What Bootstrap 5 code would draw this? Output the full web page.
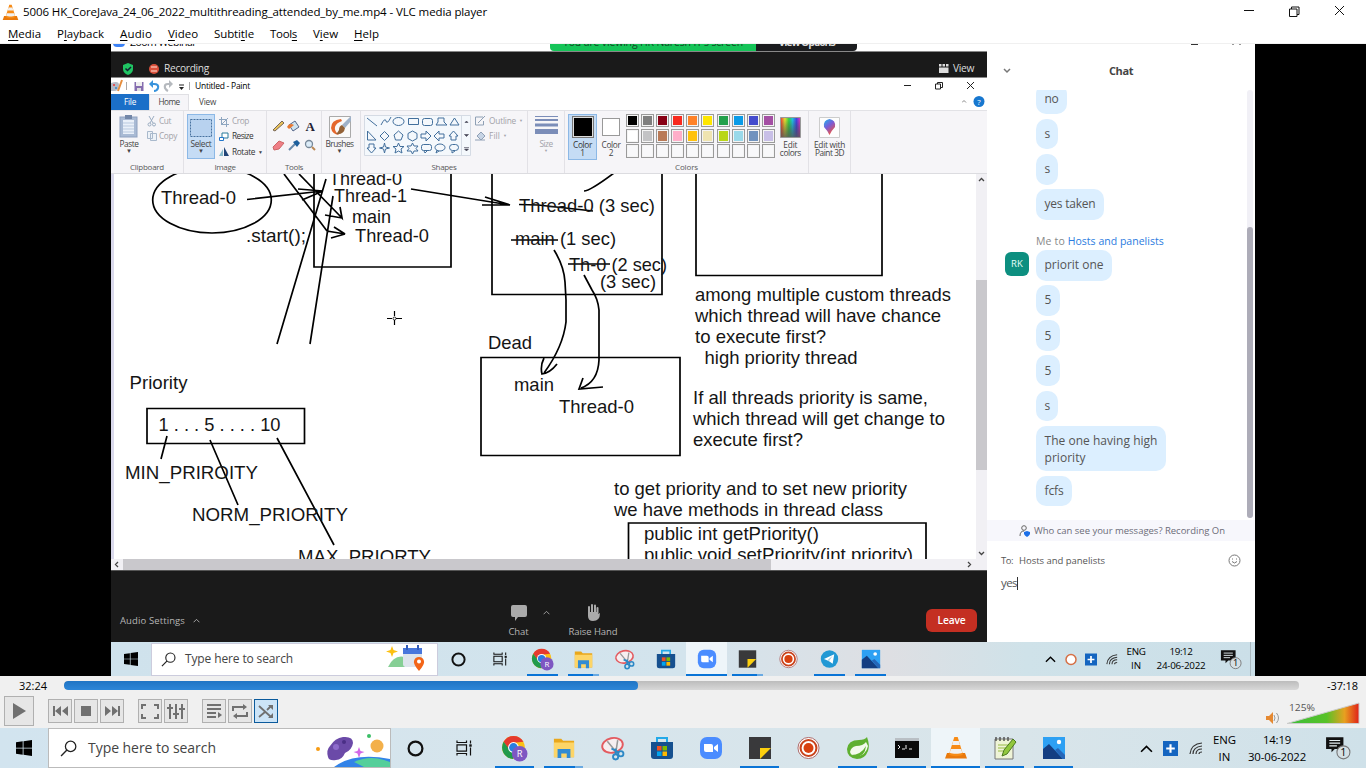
<!DOCTYPE html>
<html lang="en">
<head>
<meta charset="utf-8">
<title>VLC media player</title>
<link href="https://cdn.jsdelivr.net/npm/bootstrap@5.3.0/dist/css/bootstrap.min.css" rel="stylesheet">
<style>
body{width:1366px;height:768px;overflow:hidden;font-family:"Open Sans","Noto Sans",sans-serif;font-size:11.5px;line-height:1;color:#000;background:#fff}
svg{display:block;flex:none}
[data-w]{display:inline-block;white-space:nowrap}
.titlebar{height:24px;padding-left:2px}
.menubar{height:20px;padding-left:8px;gap:16px;border-bottom:1px solid #f0f0f0}
.menubar u{text-underline-offset:2px}
.stage{height:632px;background:#000;padding-left:111px}
.screen{width:1144px;height:632px;background:#fff}
.meeting{width:876px;height:598px}
.chat-pane{width:268px;height:598px;color:#555}
.win-strip{height:7px;overflow:hidden}
.green-tab{width:206px;height:7px;background:#15c458;border-radius:0 0 0 4px;margin-left:353px;color:#164425}
.dark-tab{width:101px;height:7px;background:#1b1c1e;border-radius:0 0 4px 0;color:#ddd}
.clip-line{font-size:10.5px;line-height:12px;margin-top:-8px}
.meet-bar{height:27px;background:#1a1a1a;border-top:1px solid #888;border-bottom:1px solid #888;color:#ddd;font-size:10.2px;padding:7px 0 0 0}
.paint-title{height:16px;font-size:8.5px}
.paint-tabs{height:16px;font-size:8.2px;color:#444}
.tab-file{width:38px;background:#1b6fc8;color:#fff}
.tab-home{width:40px;background:#f6f5f8;border:1px solid #e0e0e4;border-bottom:0}
.ribbon{height:64px;background:#f6f5f8;border-top:1px solid #e2e2e6;border-bottom:1px solid #dcdce0;font-size:8.3px;color:#444}
.rgroup{border-right:1px solid #e2e1e6;height:62px;padding-top:3px}
.rbody{height:49px}
.rlabel{font-size:8px;line-height:10px;text-align:center;color:#5a5a5a;margin-top:-1px}
.dim{color:#a2a2a8}
.down{font-size:6px;line-height:6px}
.picked{background:#c5dcf5;border:1px solid #8cb8e6}
.swatches{display:grid;grid-template-columns:repeat(10,13px);grid-auto-rows:13.4px;gap:1.8px 2.1px}
.swatches i{border:1px solid #9a9a9a;box-shadow:inset 0 0 0 1px #f4f4f4;background:var(--c,#f8f8fa)}
.board{height:385px}
.board text{font-family:"Liberation Sans",Arial,sans-serif;font-size:18.4px;fill:#151515}
.vscroll{width:11px;height:385px;background:#f1f0f4;padding-top:106px}
.vthumb{height:190px;background:#c9c8cc}
.hscroll{height:11px;background:#f1f0f4;padding-left:12px}
.hthumb{width:648px;height:11px;background:#c9c8cc}
.meet-foot{height:72px;background:#1a1a1a;color:#b5b5b5;font-size:9.5px;border-top:1px solid #555}
.leave{background:#c42f22;color:#fff;font-weight:600;width:51px;height:23px;border-radius:6px;font-size:10.2px}
.chat-head{height:39px;font-weight:700;color:#444;font-size:11px}
.chat-list{height:430px;overflow:hidden;font-size:12px}
.bubble{background:#dcefff;border-radius:10px;height:30.8px;padding:0 8.5px;margin-bottom:4.4px;width:max-content;display:flex;align-items:center}
.avatar-sq{width:24px;height:24px;border-radius:6px;background:#0d8f80;color:#e6fffb;font-size:9.5px}
.chat-track{width:6px;height:428px;background:#f1f0f6;border-radius:3px;padding-top:137px;margin-right:2px}
.chat-thumb{height:291px;background:#adacb8;border-radius:3px}
.chat-note{height:21px;background:#f7f7fc;font-size:9.5px;color:#6c6c78;padding-left:32px}
.tb-inner{height:34px;background:linear-gradient(90deg,#cfe2ec 0,#d3e4ed 50%,#dedfe3 68%,#cfe2e9 80%,#cbdfe8)}
.tb-outer{height:40px;background:linear-gradient(90deg,#d2e4ef,#d7e5ec 45%,#d9e5ea 75%,#cfe1e9)}
.tb-inner .sbox{width:287px;height:33px;background:#fff;border:1px solid #ccd}
.tb-outer .sbox{width:343px;height:40px;background:#fff;border:1px solid #bbb}
.tcell{height:100%;display:flex;align-items:center;justify-content:center;position:relative}
.tb-inner .tcell{width:41px}.tb-outer .tcell{width:49px}
.open-app::after{content:"";position:absolute;bottom:0;left:5px;right:5px;height:2px;background:#0a74d6}
.many::after{background:linear-gradient(90deg,#0a74d6 80%,#6aaae2 80%)}
.active-app{background:#eef5f9}.active-app::after{left:0;right:0}
.clock{text-align:center;font-size:9.8px}
.tb-inner .clock{line-height:14.4px}.tb-outer .clock{line-height:17px;font-size:11.4px}
.player{height:52px;background:#f0f0f0}
.seek{width:1235px;height:9px;border-radius:4px;background:linear-gradient(#bcbcbc,#d8d8d8);overflow:hidden}
.seek div{height:9px;border-radius:4px;background:linear-gradient(#1f74c4,#2d86d8)}
.pbtn{width:24px;height:24px;border:1px solid #b0b0b0;background:#e6e6e6;display:flex;align-items:center;justify-content:center;margin-right:2px}
.pbtn.big{width:30px;height:30px;margin-right:14px}
.pbtn.on{background:#cce4f7;border-color:#0a5a9c}
</style>
</head>
<body>
<svg class="position-absolute" width="0" height="0">
<defs>
<linearGradient id="rain"><stop offset="0" stop-color="#e33"/><stop offset=".22" stop-color="#dd3"/><stop offset=".42" stop-color="#3c4"/><stop offset=".6" stop-color="#2bd"/><stop offset=".8" stop-color="#44d"/><stop offset="1" stop-color="#e3b"/></linearGradient>
<linearGradient id="dk" x1="0" x2="0" y1="0" y2="1"><stop offset=".1" stop-color="#333" stop-opacity="0"/><stop offset="1" stop-color="#555" stop-opacity=".8"/></linearGradient>
<linearGradient id="drop" x1="0" y1="0" x2=".6" y2="1"><stop offset="0" stop-color="#19b6ee"/><stop offset=".5" stop-color="#7a5cd8"/><stop offset="1" stop-color="#f2543d"/></linearGradient>
<linearGradient id="vol"><stop offset="0" stop-color="#3bbd3b"/><stop offset=".55" stop-color="#58c228"/><stop offset=".8" stop-color="#e8a020"/><stop offset="1" stop-color="#e02018"/></linearGradient>
</defs>
<symbol id="cone" viewBox="0 0 24 24"><path d="M3 17h18l2 5.500H1z" fill="#e9790c"/><path d="M10.300 1h3.400l5.300 17.500c-3 2.300-11 2.300-14 0z" fill="#f78b16"/><path d="M9.200 5h5.600l1.200 4H8zM6.800 13h10.400l1.100 3.700c-3 1.300-9.600 1.300-12.600 0z" fill="#f1f1f1"/></symbol>
<symbol id="win" viewBox="0 0 16 16"><path d="M0 2.300l6.700-.95v6.300H0zM7.500 1.200 16 0v7.650H7.500zM0 8.400h6.700v6.300L0 13.750zM7.500 8.400H16V16l-8.500-1.150z"/></symbol>
<symbol id="mag" viewBox="0 0 16 16"><circle cx="10" cy="6" r="4.900" fill="none" stroke="#222" stroke-width="1.200"/><path d="M6.500 9.500 1 15" stroke="#222" stroke-width="1.300"/></symbol>
<symbol id="cort" viewBox="0 0 16 16"><circle cx="8" cy="8" r="6.500" fill="none" stroke="#111" stroke-width="2.100"/></symbol>
<symbol id="task" viewBox="0 0 18 16"><path d="M2 .5v2h9.500v-2M2 15.500v-2h9.500v2M2 4.800h9.500v6.400H2zM15.500 .5v3M15.500 7.500v8" fill="none" stroke="#111" stroke-width="1.200"/><path d="M14.300 4.300h2.400v2.400h-2.400z" fill="#111"/></symbol>
<symbol id="chrome" viewBox="0 0 26 26"><circle cx="12" cy="12" r="11" fill="#fbc116"/><path d="M2.500 6.500A11 11 0 0 1 21.600 6.500L12 7.500 8 14.500z" fill="#e53a2e"/><path d="M2.500 6.500A11 11 0 0 0 11.500 23l5-8.700-8 .2z" fill="#219a4b"/><circle cx="12" cy="12" r="5.200" fill="#fff"/><circle cx="12" cy="12" r="4.200" fill="#2a7de1"/><circle cx="18" cy="18" r="7.500" fill="#7e57c2"/><text x="18" y="21" font-size="9" text-anchor="middle" fill="#fff">R</text></symbol>
<symbol id="folder" viewBox="0 0 24 24"><path d="M1 2h8l2 2h12v18H1z" fill="#e9a71c"/><path d="M1 6h22v16H1z" fill="#fdd567"/><path d="M5 13h14v10h-4v-5H9v5H5z" fill="#318bd3"/></symbol>
<symbol id="snip" viewBox="0 0 24 24"><ellipse cx="12" cy="9" rx="10" ry="7" transform="rotate(-12 12 9)" fill="#f6eef0" stroke="#e35b60" stroke-width="1.800"/><path d="m7 5 10 12M17 4l-2 13" stroke="#999" stroke-width="1.500"/><g fill="none" stroke="#2c88c6" stroke-width="1.800"><circle cx="15" cy="20" r="2.500"/><circle cx="20" cy="17" r="2.500"/><path d="m11 12 7 4M15 12v6"/></g></symbol>
<symbol id="store" viewBox="0 0 24 24"><path d="M7 6V2h10v4" fill="none" stroke="#23a9e8" stroke-width="2"/><path d="M1 6h22v14q0 3-3 3H4q-3 0-3-3z" fill="#16508f"/><path d="M7 10h4.500v4.500H7z" fill="#f25022"/><path d="M12.500 10H17v4.500h-4.500z" fill="#7fba00"/><path d="M7 15.500h4.500V20H7z" fill="#00a4ef"/><path d="M12.500 15.500H17V20h-4.500z" fill="#ffb900"/></symbol>
<symbol id="zoomi" viewBox="0 0 24 24"><rect x="1" y="1" width="22" height="22" rx="7" fill="#4a8cff"/><path d="M5 8h7q2 0 2 2v6H7q-2 0-2-2zM15 11l4-3v8l-4-3z" fill="#fff"/></symbol>
<symbol id="note" viewBox="0 0 24 24"><path d="M1 1h22v22H1z" fill="#39393b"/><path d="M12 12h11L12 23z" fill="#fccf0e"/></symbol>
<symbol id="rec" viewBox="0 0 24 24"><circle cx="12" cy="12" r="11" fill="#fff" stroke="#a66" stroke-width="1"/><circle cx="12" cy="12" r="8.300" fill="none" stroke="#c9431c" stroke-width="2.200"/><circle cx="12" cy="12" r="5.200" fill="#d8400f"/></symbol>
<symbol id="tele" viewBox="0 0 24 24"><circle cx="12" cy="12" r="11" fill="#2298d4"/><path d="m5 12 13-6-2 12-5-3.500z" fill="#fff"/><path d="m10 13 6-5-5 7z" fill="#a4cce2"/></symbol>
<symbol id="photo" viewBox="0 0 24 24"><path d="M1 1h22v22H1z" fill="#2da0f3"/><path d="m1 13 6-5 14 15H1z" fill="#143e82"/><path d="m13 14 3-2 7 7v4h-2z" fill="#2666b8"/><circle cx="17" cy="6" r="2.200" fill="#fff"/></symbol>
<symbol id="spring" viewBox="0 0 24 24"><path d="M21 1q3 8 1 14-3 8-11 8-10-1-10-10Q2 4 13 4q6 0 8-3z" fill="#5fb030"/><path d="M20 6q-3 4-10 4-5 1-6 6 1 4 6 4 10 0 12-10" fill="#f3faec"/><path d="M5 19q10 0 15-9-1 11-11 11z" fill="#5fb030"/></symbol>
<symbol id="cmd" viewBox="0 0 24 20"><path d="M0 0h24v20H0z" fill="#0a0a0a"/><path d="M0 0h24v3H0z" fill="#b9bfc4"/><path d="m3 7 2 2-2 2M7 11h3M11 7v4M14 11h3" stroke="#eee" fill="none"/></symbol>
<symbol id="npp" viewBox="0 0 24 24"><path d="M2 3h18v20H2z" fill="#eff4d7" stroke="#777"/><path d="M3 1v4M7 1v4M11 1v4M15 1v4" stroke="#555" stroke-width="1.500"/><path d="M5 9h10M5 12h9M5 15h5" stroke="#9b4"/><path d="m9 20 2-6L20 3l3 3-9 12z" fill="#92c73d" stroke="#4a7a1e"/></symbol>
<symbol id="up" viewBox="0 0 12 8"><path d="m1 7 5-5 5 5" fill="none" stroke="currentColor" stroke-width="1.500"/></symbol>
<symbol id="plus" viewBox="0 0 14 14"><path d="M0 0h14v14H0z" fill="#1565c0"/><path d="M7 3v8M3 7h8" stroke="#fff" stroke-width="2"/></symbol>
<symbol id="wifi" viewBox="0 0 14 14"><g fill="none" stroke="#333" stroke-width="1.200"><path d="M1 13Q2 3 13 2M4 13Q4 6 13 5M7 13Q7 8 13 8M10 13q0-2 3-2"/></g></symbol>
<symbol id="noti" viewBox="0 0 24 22"><path d="M1 1h16v11H9l-3 3v-3H1z" fill="#111"/><path d="M4 4h10M4 6.500h10M4 9h7" stroke="#e5eef2"/><circle cx="17" cy="15" r="6" fill="#d5dfe4" stroke="#777"/><text x="17" y="18.500" font-size="10" text-anchor="middle">1</text></symbol>
</svg>

<header>
 <div class="titlebar d-flex align-items-center">
  <svg width="17" height="17"><use href="#cone"/></svg>
  <span class="ms-1" data-w="464">5006 HK_CoreJava_24_06_2022_multithreading_attended_by_me.mp4 - VLC media player</span>
  <svg class="ms-auto" width="110" height="16" fill="none" stroke="#111"><path d="M0 6.500h10M45.500 5h7.500v7.500h-7.500zM47.500 5V3h7.500v7.500h-2M91 2l9 9M100 2l-9 9"/></svg>
  <span style="width:12px"></span>
 </div>
 <nav class="menubar d-flex align-items-center">
  <span data-w="33"><u>M</u>edia</span><span data-w="47">P<u>l</u>ayback</span><span data-w="32"><u>A</u>udio</span><span data-w="30"><u>V</u>ideo</span><span data-w="40">Subti<u>t</u>le</span><span data-w="27">Tool<u>s</u></span><span data-w="25">V<u>i</u>ew</span><span data-w="25"><u>H</u>elp</span>
 </nav>
</header>

<main class="stage">
<div class="screen">
 <div class="d-flex">
  <section class="meeting">
   <div class="win-strip d-flex">
    <svg width="15" height="7"><rect x="2" y="-8" width="12" height="11" rx="4" fill="#3c82f6"/></svg>
    <div class="clip-line ms-1" style="width:67px"><span data-w="66">Zoom Webinar</span></div>
    <div class="green-tab overflow-hidden text-center"><div class="clip-line"><span data-w="180">You are viewing HK Naresh IT's screen</span></div></div>
    <div class="dark-tab overflow-hidden text-center"><div class="clip-line fw-bold"><span data-w="56">View Options</span></div></div>
   </div>
   <div class="meet-bar d-flex align-items-start">
    <svg style="margin:3px 0 0 10px" width="14" height="14" viewBox="0 0 14 14"><path d="m7 1 5 2v4q0 4-5 6-5-2-5-6V3z" fill="#20c463"/><path d="m4.500 6.500 2 2 3.500-3.500" stroke="#123" fill="none" stroke-width="1.500"/></svg>
    <svg style="margin:4px 0 0 14px" width="11" height="12"><circle cx="5" cy="6" r="5" fill="#d9503b"/><path d="M2 4h6M2 8h6" stroke="#f3b3a4" stroke-width="1.500"/></svg>
    <span data-w="45" style="margin:4px 0 0 4px">Recording</span>
    <svg class="ms-auto" style="margin-top:4px" width="10" height="11" fill="#ddd"><path d="M0 1h2.500v2.500H0zM3.500 1H6v2.500H3.500zM7 1h2.500v2.500H7zM0 4.500h9.500V10H0z"/></svg>
    <span data-w="21" style="margin:4px 13px 0 4px">View</span>
   </div>

   <div class="paint-title d-flex align-items-center">
    <svg width="82" height="16" viewBox="0 0 82 16"><path d="M0 5q8-3 8 2 0 6-5 6H0z" fill="#b4b9c5"/><circle cx="3" cy="7" r="1" fill="#e33"/><circle cx="5" cy="10" r="1" fill="#38c"/><path d="m11 2-4 11" stroke="#e58d3d" stroke-width="2"/><path d="M15.500 4v8M78.500 4v8" stroke="#aaa"/><path d="M23.500 4h9v9h-9z" fill="#856daf"/><path d="M25 4h6v4h-6z" fill="#eee"/><path d="M26 10h4v3h-4z" fill="#ddd"/><path d="M39 6h4q5 0 4 4-1 3-4 3" fill="none" stroke="#3993dc" stroke-width="2.200"/><path d="m42 2-4 4 4 4z" fill="#3993dc"/><path d="M61 6h-4q-4 0-3 4 1 2 3 3" fill="none" stroke="#b5b9be" stroke-width="2.200"/><path d="m58 2 4 4-4 4z" fill="#b5b9be"/><path d="M68 7h5" stroke="#222"/><path d="M68 9h5l-2.500 3z" fill="#222"/></svg>
    <span data-w="55" style="margin-left:2px">Untitled - Paint</span>
    <svg class="ms-auto" style="margin-right:11px" width="72" height="12" fill="none" stroke="#222"><path d="M0 5.500h7M31.500 4h5v5h-5zM33.500 4V2.500h5v5h-2M63 2l7 7M70 2l-7 7"/></svg>
   </div>
   <div class="paint-tabs d-flex align-items-stretch">
    <div class="tab-file d-flex align-items-center justify-content-center"><span data-w="12">File</span></div>
    <div class="tab-home d-flex align-items-center justify-content-center"><span data-w="21">Home</span></div>
    <div class="d-flex align-items-center" style="margin-left:10px"><span data-w="17">View</span></div>
    <svg class="ms-auto" width="25" height="16"><path d="m0 8.500 2-2 2 2" stroke="#888" fill="none"/><circle cx="17" cy="7.500" r="5.500" fill="#1777cf"/><text x="17" y="10.500" font-size="8" text-anchor="middle" fill="#fff">?</text></svg>
   </div>
   <div class="ribbon d-flex">
    <div class="rgroup" style="width:73px">
     <div class="rbody d-flex">
      <div class="d-flex flex-column align-items-center" style="width:36px"><svg width="20" height="25" viewBox="0 0 20 25"><rect x="1" y="3" width="17" height="20" fill="#a9bad4" stroke="#8fa2c0"/><path d="M4 6h11v14H4z" fill="#eaf0f9"/><path d="M4 9h11M4 12h11M4 15h11M4 18h11" stroke="#b9c9df"/><path d="M6 1h7v4H6z" fill="#7387a8"/></svg><span data-w="19" style="margin-top:1px">Paste</span><span class="down">▼</span></div>
      <div class="dim"><div class="d-flex align-items-center" style="height:14px"><svg width="10" height="11" viewBox="0 0 10 11" stroke="#9aacc0" fill="none"><path d="m2 0 4 7M7 0 3 7"/><circle cx="2.500" cy="8.500" r="1.500"/><circle cx="7" cy="8.500" r="1.500"/></svg><span data-w="12" style="margin-left:2px">Cut</span></div><div class="d-flex align-items-center" style="height:16px"><svg width="10" height="10" fill="#edf2f8" stroke="#a9b9cc"><path d="M.5.5h5v7h-5zM3.500 2.500h6v7h-6z"/></svg><span data-w="18" style="margin-left:2px">Copy</span></div></div>
     </div>
     <div class="rlabel"><span data-w="34">Clipboard</span></div>
    </div>
    <div class="rgroup ps-1" style="width:83px">
     <div class="rbody d-flex">
      <div class="picked d-flex flex-column align-items-center" style="width:28px;height:45px;margin-left:-1px"><svg width="22" height="25"><path d="M.5 4.500h21v17h-21z" fill="#b8d2ef" stroke="#47719f" stroke-dasharray="2 1"/></svg><span data-w="21">Select</span><span class="down">▼</span></div>
      <div class="ps-1"><div class="d-flex align-items-center dim" style="height:15px"><svg width="10" height="10" fill="none" stroke="#8fa6c0"><path d="M2.500 0v7.500H10M0 2.500h7.500V10M2 8l7-7"/></svg><span data-w="17" style="margin-left:3px">Crop</span></div><div class="d-flex align-items-center" style="height:15px"><svg width="10" height="10" fill="#fff"><path d="M3 1h6v5H3z" stroke="#2a7a9a"/><path d="M.5 5.500h4v3h-4z" stroke="#27c"/></svg><span data-w="21" style="margin-left:3px;color:#333">Resize</span></div><div class="d-flex align-items-center" style="height:16px"><svg width="10" height="10"><path d="M0 9h4V2z" fill="#8bc"/><path d="M5 0v9h5z" fill="#247"/></svg><span data-w="23" style="margin-left:3px;color:#333">Rotate</span><span class="down" style="font-size:5px;margin-left:3px">▼</span></div></div>
     </div>
     <div class="rlabel pe-1"><span data-w="21">Image</span></div>
    </div>
    <div class="rgroup" style="width:55px">
     <div class="rbody"><svg width="54" height="49" viewBox="0 0 54 49"><path d="m6 16 9-9 2 2-9 8z" fill="#e8c25a" stroke="#765"/><path d="m22 11 6-4 4 6-6 4z" fill="#cfe3ef" stroke="#568"/><path d="M20 13q2-5 7-2l-5 4z" fill="#e87831"/><text x="38.500" y="17" font-family="Liberation Serif" font-weight="bold" font-size="13" fill="#223">A</text><path d="m6 33 6-6 5 2-5 6-5 1z" fill="#ef7f87" stroke="#c66"/><path d="m22 36 7-7" stroke="#68a" stroke-width="2"/><path d="m26 28 4-2 3 3-3 4z" fill="#1d5f9c"/><circle cx="42" cy="30" r="3.500" fill="#dcecf8" stroke="#789" stroke-width="1.300"/><path d="m45 33 3 3" stroke="#b85" stroke-width="2"/></svg></div>
     <div class="rlabel"><span data-w="18">Tools</span></div>
    </div>
    <div class="rgroup d-flex flex-column align-items-center" style="width:39px;padding-right:3px">
     <svg width="24" height="24" viewBox="0 0 24 24" style="margin-top:1px"><path d="M1.500 1.500h21v21h-21z" fill="#fafafa" stroke="#aaa"/><path d="M13 4Q3 5 3 13q1 6 8 7-5-4-4-8 1-4 7-6z" fill="#e5682e"/><path d="m23 1-9 9 3 3 6-7z" fill="#9fb2c9"/><path d="M8 19q8 1 9-6l-3-3q-3 1-3 5-1 2-3 4z" fill="#936237"/></svg><span data-w="28" style="margin-top:1px">Brushes</span><span class="down">▼</span>
    </div>
    <div class="rgroup" style="width:167px">
     <div class="rbody d-flex">
      <svg width="107" height="43" viewBox="0 0 107 43" fill="none" stroke="#426f9c" style="margin-left:3px"><path d="M.5 1.500h106v40H.5zM97.500 1.500v40" fill="#f4f8fc" stroke="#d5dbe4"/><path d="m3 4 10 8M17 11q4-8 5-4t5-4M44.500 4.500h10v6h-10zM72 11l2-3 0-4h6v4l3 3zM86 11l4.500-7L95 11zM3.500 17v9H12zM16 22l4.500-4.500L25 22l-4.500 4.500zM30 21l4.500-4 4.500 4-2 5h-5.500zM44 19.500l4.500-2.500 4.500 2.500v5L48.500 27 44 24.500zM57 20h5v-3l5 5-5 5v-3h-5zM80 20h-5v-3l-5 5 5 5v-3h5zM87 26v-4h-2l4.500-5 4.500 5h-2v4zM5 30h5v4h2l-4.500 5L3 34h2zM20.500 29l1 4 4 1-4 1-1 4-1-4-4-1 4-1zM34.500 29l1.500 3.500h4l-3 2.500 1 4-3.500-2-3.500 2 1-4-3-2.500h4zM48.500 29l1.500 3h4l-2 2.500 2 2.500h-4l-1.500 3-1.500-3h-4l2-2.500-2-2.500h4z"/><ellipse cx="34.500" cy="7.500" rx="5.500" ry="4"/><rect x="58.500" y="4.500" width="10" height="7" rx="2"/><rect x="57.500" y="30.500" width="10" height="6" rx="2"/><ellipse cx="76" cy="33.500" rx="5" ry="3.500"/><rect x="85.500" y="30.500" width="9" height="6" rx="3"/><path d="m60 37 1 2 2-2M73 36l-1 3 3-2M88 37v2l3-2"/><path d="M101 8.500h3L102.500 7zM100.500 20.500h4l-2 2zM100 33.500h5M100.500 35h4l-2 2z" fill="#445" stroke="#445" stroke-width=".6"/></svg>
      <div class="dim" style="padding-left:4px"><div class="d-flex align-items-center" style="height:14px"><svg width="11" height="10" fill="none" stroke="#8fa0b5"><path d="M8 1H.5v8h8V5M3 7l7-7"/></svg><span data-w="27" style="margin-left:3px">Outline</span><span class="down" style="font-size:4px;margin-left:3px">▼</span></div><div class="d-flex align-items-center" style="height:16px"><svg width="11" height="10" fill="#c7d4e5" stroke="#8fa0b5"><path d="m2 5 4-4 4 4-4 4zM0 9h10"/></svg><span data-w="11" style="margin-left:3px">Fill</span><span class="down" style="font-size:4px;margin-left:3px">▼</span></div></div>
     </div>
     <div class="rlabel"><span data-w="25">Shapes</span></div>
    </div>
    <div class="rgroup d-flex flex-column align-items-center dim" style="width:37px">
     <svg width="23" height="25" stroke="#7b8db8"><path d="M0 2.500h23"/><path d="M0 6h23" stroke-width="2"/><path d="M0 11h23" stroke-width="3"/><path d="M0 17.500h23" stroke-width="5"/></svg><span data-w="13" style="margin-top:1px">Size</span><span class="down" style="font-size:4px">▼</span>
    </div>
    <div class="rgroup" style="width:244px">
     <div class="rbody d-flex">
      <div class="picked d-flex flex-column align-items-center text-center" style="width:29px;height:46px;margin-left:3px;color:#333"><div style="width:22px;height:22px;background:#000;border:1px solid #777;box-shadow:inset 0 0 0 1px #ddd;margin-top:1px;margin-bottom:3px"></div><span data-w="19">Color</span><span>1</span></div>
      <div class="d-flex flex-column align-items-center text-center" style="width:28px;height:46px"><div style="width:18px;height:18px;background:#fff;border:1px solid #999;margin:4px 0 5px"></div><span data-w="19">Color</span><span>2</span></div>
      <div class="swatches" style="margin-left:1px" id="palette"></div>
      <div class="d-flex flex-column align-items-center" style="width:29px;margin-left:1px"><svg width="21" height="21" style="margin:3px 0"><path d="M.5.5h20v20H.5z" fill="url(#rain)" stroke="#999"/><path d="M1 1h19v19H1z" fill="url(#dk)"/></svg><span data-w="14">Edit</span><span data-w="21">colors</span></div>
     </div>
     <div class="rlabel"><span data-w="23">Colors</span></div>
    </div>
    <div class="rgroup d-flex flex-column align-items-center" style="width:42px">
     <svg width="21" height="21" style="margin:3px 0"><path d="M.5.500h20v20H.5z" fill="#fdfdfd" stroke="#ccc"/><path d="M10.500 18Q8 13 5 10q-1-7 5.500-8Q17 3 16 10q-3 3-5.500 8z" fill="url(#drop)"/></svg><span data-w="31">Edit with</span><span data-w="29">Paint 3D</span>
    </div>
   </div>

   <div class="d-flex">
    <svg class="board" width="865" height="385" viewBox="111 174 865 385">
     <path d="M111 174h865v385H111z" fill="#fff"/><path d="M111 174h3v385h-3z" fill="#dad9ec"/>
     <g fill="none" stroke="#000" stroke-width="1.700">
      <ellipse cx="212" cy="200" rx="59.300" ry="33"/>
      <path d="M314 170v97h137v-97M492 170v124.500h170V170M696 170v105.500h186V170M481 357.500h199v98H481zM147 408.500h157.500v35H147zM628.500 565v-42H926v42"/>
      <path d="m247 199.500 76-8.500-25-2M323 191l-21 9M284 174l43 57 18 3-11-7M345 234l-14 4M299 174l43 44-2-11M342 218l-17-3M326 179l-49 165M333 196l-23 148M411 189l99 16-25-8M510 205h-28M584 191q6 0 30-18M519 204.500l19 .5 55 6M511 240h47M568 264h42"/>
      <path d="M554 250q10 16 11 32l1 18v22q-3 25-22 51M544 358q-4 8-2 16 8-1 15-10M584 275l8 15q6 9 7 20v50q-1 22-18 28M583 378l-4 11 24-2M167 436l-6 23M210 440l28 65M277 438l57 107"/>
      <path d="M387 318.500h5m4 0h6M394.500 311v5m0 4v5" stroke-width="1.200"/><circle cx="394.500" cy="318.500" r="1.500" stroke-width=".8"/>
     </g>
     <g id="notes">
      <text x="161" y="204" textLength="75">Thread-0</text><text x="329" y="184.500" textLength="73">Thread-0</text><text x="334" y="202" textLength="73">Thread-1</text><text x="352" y="222.500" textLength="39">main</text><text x="355" y="242" textLength="74">Thread-0</text><text x="246" y="242" textLength="60">.start();</text>
      <text x="519" y="211.500" textLength="136">Thread-0 (3 sec)</text><text x="515" y="245" textLength="101">main (1 sec)</text><text x="569" y="271" textLength="98">Th-0 (2 sec)</text><text x="600" y="287.500" textLength="56">(3 sec)</text>
      <text x="488" y="349" textLength="44">Dead</text><text x="514" y="391" textLength="40">main</text><text x="559" y="413" textLength="75">Thread-0</text>
      <text x="695" y="300.500" textLength="256">among multiple custom threads</text><text x="695" y="321.500" textLength="246">which thread will have chance</text><text x="695" y="342.500" textLength="131">to execute first?</text><text x="704.500" y="364" textLength="153">high priority thread</text>
      <text x="693" y="403.500" textLength="235">If all threads priority is same,</text><text x="693" y="425" textLength="252">which thread will get change to</text><text x="693" y="446" textLength="110">execute first?</text>
      <text x="614" y="495" textLength="293">to get priority and to set new priority</text><text x="614" y="516" textLength="269">we have methods in thread class</text><text x="644" y="540" textLength="175">public int getPriority()</text><text x="644" y="561" textLength="269">public void setPriority(int priority)</text>
      <text x="129.500" y="388.500" textLength="58">Priority</text><text x="158.500" y="431" textLength="122">1 . . . 5 . . . . 10</text><text x="125" y="478.500" textLength="133">MIN_PRIROITY</text><text x="192" y="521" textLength="156">NORM_PRIORITY</text><text x="298" y="563" textLength="133">MAX_PRIORTY</text>
     </g>
    </svg>
    <div class="vscroll position-relative"><div class="vthumb"></div><svg class="position-absolute top-0 start-0" width="11" height="385" fill="none" stroke="#444" stroke-width="1.300"><path d="m3 7 2.500-2.500L8 7M3 378l2.500 2.500L8 378"/></svg></div>
   </div>
   <div class="hscroll position-relative"><div class="hthumb"></div><svg class="position-absolute top-0 start-0" width="876" height="11" fill="none" stroke="#444" stroke-width="1.300"><path d="M7 3 4.500 5.500 7 8M857 3l2.500 2.500L857 8"/></svg></div>

   <div class="meet-foot d-flex">
    <div class="d-flex align-items-center" style="width:372px;padding-left:9px;padding-top:28px"><span data-w="65">Audio Settings</span><svg class="ms-2" width="7" height="5"><use href="#up"/></svg></div>
    <div class="d-flex flex-column align-items-center" style="width:71px;padding-top:33px"><svg width="18" height="18" viewBox="0 0 18 18"><path d="M3 1h12q2 0 2 2v8q0 2-2 2H8l-3 4v-4H3q-2 0-2-2V3q0-2 2-2z" fill="#aaa"/></svg><span data-w="20" style="margin-top:5px">Chat</span></div>
    <svg style="margin-left:-11px;margin-top:39px;color:#aaa" width="7" height="5"><use href="#up"/></svg>
    <div class="d-flex flex-column align-items-center" style="width:60px;padding-top:32px;margin-left:13px"><svg width="16" height="19" viewBox="0 0 16 19" fill="none" stroke="#aaa" stroke-linecap="round" stroke-width="2"><path d="M4 10V4M7 9V2M10 9V2.500M12.500 10V5"/><path d="M3 9h10v2l2-1q0 8-7 8-5 0-5-5z" fill="#aaa" stroke="none"/></svg><span data-w="49" style="margin-top:5px">Raise Hand</span></div>
    <div class="leave d-flex align-items-center justify-content-center ms-auto" style="margin-right:10px;margin-top:38px"><span data-w="28">Leave</span></div>
   </div>
  </section>

  <aside class="chat-pane">
   <div class="win-strip"><svg width="268" height="7"><path d="M204 .5h7M245 0h2m5 0h2" stroke="#333"/></svg></div>
   <div class="chat-head d-flex align-items-center" style="padding:0 0 0 16px"><svg width="8" height="6" fill="none" stroke="#777" stroke-width="1.500"><path d="m1 1 3 3 3-3"/></svg><span data-w="24" style="margin-left:98px">Chat</span></div>
   <div class="d-flex chat-list">
    <div class="d-flex flex-column align-items-start flex-fill" style="padding-left:49px;margin-top:-6.500px">
     <div class="bubble"><span data-w="14">no</span></div><div class="bubble"><span data-w="5">s</span></div><div class="bubble"><span data-w="5">s</span></div><div class="bubble"><span data-w="51">yes taken</span></div>
     <div style="height:25.500px;padding-top:11.500px;font-size:10.500px;color:#888"><span data-w="29">Me to</span> <span data-w="96" style="color:#2a7be0">Hosts and panelists</span></div>
     <div class="d-flex" style="margin-left:-31px"><div class="avatar-sq d-flex align-items-center justify-content-center" style="margin:2px 7px 0 0"><span data-w="12">RK</span></div><div class="bubble"><span data-w="59">priorit one</span></div></div>
     <div class="bubble"><span data-w="7">5</span></div><div class="bubble"><span data-w="7">5</span></div><div class="bubble"><span data-w="7">5</span></div><div class="bubble"><span data-w="5">s</span></div>
     <div class="bubble" style="height:45px;margin-top:.5px;padding-top:2px"><div style="line-height:16.500px"><span data-w="113">The one having high</span><br><span data-w="41">priority</span></div></div>
     <div class="bubble"><span data-w="19">fcfs</span></div>
    </div>
    <div class="chat-track"><div class="chat-thumb"></div></div>
   </div>
   <div class="chat-note d-flex align-items-center"><svg width="11" height="12" viewBox="0 0 11 12" fill="none" stroke="#666"><circle cx="5" cy="3" r="2.300"/><path d="M1 11q0-5 4-5"/><path d="m8 6 3 1v2q-1 2-3 3-2-1-3-3V7z" fill="#1c6fe8" stroke="none"/></svg><span data-w="191" style="margin-left:4px">Who can see your messages? Recording On</span></div>
   <div class="d-flex align-items-center" style="height:39px;padding:0 14px;font-size:9.500px"><span data-w="12">To:</span><span data-w="86" style="margin-left:6px">Hosts and panelists</span><svg class="ms-auto" width="13" height="13" fill="none" stroke="#777"><circle cx="6.500" cy="6.500" r="5.500"/><path d="M4 7.500q2.500 3 5 0M4.500 4.500v1M8.500 4.500v1"/></svg></div>
   <div class="d-flex align-items-center" style="padding-left:14px;height:14px;margin-top:-4px"><span data-w="16">yes</span><i style="width:1px;height:13px;background:#333"></i></div>
  </aside>
 </div>

 <div class="tb-inner d-flex align-items-center">
  <div class="d-flex justify-content-center" style="width:40px"><svg width="14" height="14"><use href="#win"/></svg></div>
  <div class="sbox d-flex align-items-center"><svg style="margin-left:9px" width="15" height="15"><use href="#mag"/></svg><span data-w="108" style="margin-left:9px;font-size:12px;color:#444">Type here to search</span>
   <svg class="ms-auto" style="margin-right:7px" width="46" height="28" viewBox="0 0 46 28"><path d="M4 22Q10 9 21 12v10z" fill="#86cf95"/><path d="m8 1 1.500 4L14 6.500 9.500 8 8 12 6.500 8 2 6.500 6.500 5z" fill="#fcbf10"/><rect x="19" y="5" width="19" height="17" rx="3" fill="#dde4ec"/><path d="M19 3h19v6H19z" fill="#4877dc"/><path d="M23 0v5M34 0v5" stroke="#335cba" stroke-width="2"/><path d="M35 26q-6-7-5-10 1-4 5-4t5 4q1 3-5 10z" fill="#f36518"/><circle cx="35" cy="16.500" r="2" fill="#fff"/></svg></div>
  <div class="tcell"><svg width="15" height="15"><use href="#cort"/></svg></div><div class="tcell"><svg width="16" height="14"><use href="#task"/></svg></div>
  <div class="tcell open-app" style="margin-left:2px"><svg width="23" height="23"><use href="#chrome"/></svg></div><div class="tcell open-app many"><svg width="19" height="19"><use href="#folder"/></svg></div><div class="tcell"><svg width="21" height="21"><use href="#snip"/></svg></div><div class="tcell"><svg width="20" height="20"><use href="#store"/></svg></div><div class="tcell open-app active-app"><svg width="20" height="20"><use href="#zoomi"/></svg></div><div class="tcell open-app many"><svg width="19" height="20"><use href="#note"/></svg></div><div class="tcell"><svg width="19" height="20"><use href="#rec"/></svg></div><div class="tcell open-app"><svg width="19" height="20"><use href="#tele"/></svg></div><div class="tcell open-app"><svg width="20" height="20"><use href="#photo"/></svg></div>
  <div class="d-flex align-items-center ms-auto"><svg width="11" height="8"><use href="#up"/></svg><svg style="margin-left:9px" width="12" height="13"><circle cx="6" cy="6.500" r="5" fill="#fff" stroke="#d57046" stroke-width="1.500"/></svg><svg style="margin-left:8px" width="12" height="13"><use href="#plus"/></svg><svg style="margin-left:9px" width="12" height="12"><use href="#wifi"/></svg><div class="clock" style="width:36px"><span data-w="19">ENG</span><br><span data-w="10">IN</span></div><div class="clock" style="width:54px"><span data-w="23">19:12</span><br><span data-w="49">24-06-2022</span></div><svg style="margin-left:12px;margin-right:8px" width="22" height="21"><use href="#noti"/></svg><i style="width:1px;height:34px;background:#aab9c0;margin-right:4px"></i></div>
 </div>
</div>
</main>

<footer>
 <div class="player">
  <div class="d-flex align-items-center" style="height:19px;font-size:11px"><span data-w="28" style="margin-left:19px">32:24</span><div class="seek" style="margin-left:17px;margin-top:-1px"><div style="width:46.500%"></div></div><span data-w="31" style="margin-left:28px">-37:18</span></div>
  <div class="d-flex align-items-center" style="padding-left:4px;height:32px">
   <div class="pbtn big"><svg width="16" height="16" fill="#707070"><path d="m2 0 13 8-13 8z"/></svg></div>
   <div class="pbtn"><svg width="17" height="12" fill="#707070"><path d="M1 1h2v10H1zM9 1v10L3 6zM16 1v10l-6-5z"/></svg></div><div class="pbtn"><svg width="10" height="10"><path d="M0 0h10v10H0z" fill="#707070"/></svg></div><div class="pbtn" style="margin-right:14px"><svg width="17" height="12" fill="#707070"><path d="M14 1h2v10h-2zM8 1v10l6-5zM1 1v10l6-5z"/></svg></div>
   <div class="pbtn"><svg width="18" height="15" fill="none" stroke="#707070" stroke-width="2"><path d="M1 5V1h4M13 1h4v4M17 10v4h-4M5 14H1v-4"/></svg></div><div class="pbtn" style="margin-right:14px"><svg width="18" height="15" fill="none" stroke="#707070" stroke-width="2"><path d="M3 0v15M9 0v15M15 0v15M0 4h6M6 10h6M12 5h6"/></svg></div>
   <div class="pbtn"><svg width="17" height="15" fill="none" stroke="#707070" stroke-width="1.800"><path d="M1 1h14M1 5h14M1 9h9M1 13h9"/><path d="m12 8 4 3-4 3z" fill="#707070" stroke="none"/></svg></div><div class="pbtn"><svg width="16" height="15" fill="none" stroke="#707070" stroke-width="2"><path d="M1 7V3h11M15 8v4H4"/><path d="m11 0 4 3-4 3zM5 9l-4 3 4 3z" fill="#707070" stroke="none"/></svg></div><div class="pbtn on"><svg width="16" height="15" fill="none" stroke="#707070" stroke-width="1.800"><path d="m1 2 12 11M1 13 7 8M9 6l4-4"/><path d="M10 1h5v5zM15 9v5h-5z" fill="#707070" stroke="none"/></svg></div>
   <svg class="ms-auto" style="margin-right:5px" width="96" height="30" viewBox="0 0 96 30"><path d="M1 20h3l4-4v12l-4-4H1z" fill="#e58932"/><path d="M9 19q2 3 0 6M11.500 17q4 5 0 10" stroke="#999" fill="none"/><path d="M22 27.500 94 7v20.500z" fill="url(#vol)" stroke="#ccc"/><text x="24" y="15" font-size="9.500" fill="#555" textLength="26" lengthAdjust="spacingAndGlyphs">125%</text></svg>
  </div>
 </div>
 <div class="tb-outer d-flex align-items-center">
  <div class="d-flex justify-content-center" style="width:48px"><svg width="16" height="16"><use href="#win"/></svg></div>
  <div class="sbox d-flex align-items-center overflow-hidden"><svg style="margin-left:11px" width="17" height="17"><use href="#mag"/></svg><span data-w="128" style="margin-left:11px;font-size:14px;color:#444">Type here to search</span>
   <svg class="ms-auto" width="76" height="38" viewBox="0 0 76 38"><circle cx="4" cy="20" r="2" fill="#f79b12"/><path d="M14 28q-2-7 2-11 5-8 13-9 10-1 10 6-1 7-8 10-3 7-9 7-7 1-8-3z" fill="#6b4aa8"/><circle cx="22" cy="18" r="3" fill="#8d6bcc"/><circle cx="30" cy="13" r="2" fill="#4a2f86"/><path d="m45 18 1.500 4 4 1-4 1.500L45 29l-1.500-4.500-4-1.500 4-1z" fill="#d368e8"/><circle cx="55" cy="7" r="2" fill="#3bbf67"/><circle cx="63" cy="17" r="6.500" fill="#f3b04a"/><path d="M20 38Q40 23 76 30v8z" fill="#3283e8"/><path d="M40 33q15-7 30-2l6 2v5H50z" fill="#55cf9a"/></svg></div>
  <div class="tcell"><svg width="17" height="17"><use href="#cort"/></svg></div><div class="tcell" style="margin-left:-1px"><svg width="18" height="16"><use href="#task"/></svg></div>
  <div class="tcell open-app" style="margin-left:2px"><svg width="27" height="27"><use href="#chrome"/></svg></div><div class="tcell open-app many"><svg width="22" height="22"><use href="#folder"/></svg></div><div class="tcell"><svg width="25" height="25"><use href="#snip"/></svg></div><div class="tcell"><svg width="24" height="24"><use href="#store"/></svg></div><div class="tcell"><svg width="24" height="24"><use href="#zoomi"/></svg></div><div class="tcell open-app"><svg width="24" height="24"><use href="#note"/></svg></div><div class="tcell"><svg width="23" height="24"><use href="#rec"/></svg></div><div class="tcell open-app"><svg width="24" height="24"><use href="#spring"/></svg></div><div class="tcell open-app"><svg width="24" height="20"><use href="#cmd"/></svg></div><div class="tcell open-app active-app"><svg width="24" height="24"><use href="#cone"/></svg></div><div class="tcell open-app"><svg width="24" height="24"><use href="#npp"/></svg></div><div class="tcell open-app"><svg width="24" height="24"><use href="#photo"/></svg></div>
  <div class="d-flex align-items-center ms-auto"><svg width="13" height="9"><use href="#up"/></svg><svg style="margin-left:10px" width="15" height="15"><use href="#plus"/></svg><svg style="margin-left:11px" width="14" height="14"><use href="#wifi"/></svg><div class="clock" style="width:43px"><span data-w="23">ENG</span><br><span data-w="12">IN</span></div><div class="clock" style="width:62px"><span data-w="28">14:19</span><br><span data-w="58">30-06-2022</span></div><svg style="margin-left:17px;margin-right:15px" width="26" height="24"><use href="#noti"/></svg></div>
 </div>
</footer>
<script src="https://cdn.jsdelivr.net/npm/bootstrap@5.3.0/dist/js/bootstrap.bundle.min.js"></script>
<script>
// paint palette, row by row
const colors = ['#000','#7f7f7f','#880015','#f8291e','#ff8127','#fee600','#22a04b','#0a9be8','#444bcd','#a44fa4','#fff','#c3c3c5','#b97a57','#ffaec9','#ffc20e','#efe4b0','#b9d618','#99d9ea','#7092be','#c8bfe7'];
document.getElementById('palette').innerHTML = Array.from({length: 30}, (_, i) => `<i style="--c:${colors[i] || '#f8f8fa'}"></i>`).join('');
// tracks each label to its intended width
document.querySelectorAll('[data-w]').forEach(el => {
  const free = +el.dataset.w - el.getBoundingClientRect().width;
  el.style.letterSpacing = (free / el.textContent.length) + 'px';
});
document.querySelectorAll('#notes text').forEach(t => t.setAttribute('lengthAdjust', 'spacingAndGlyphs'));
</script>
</body>
</html>
